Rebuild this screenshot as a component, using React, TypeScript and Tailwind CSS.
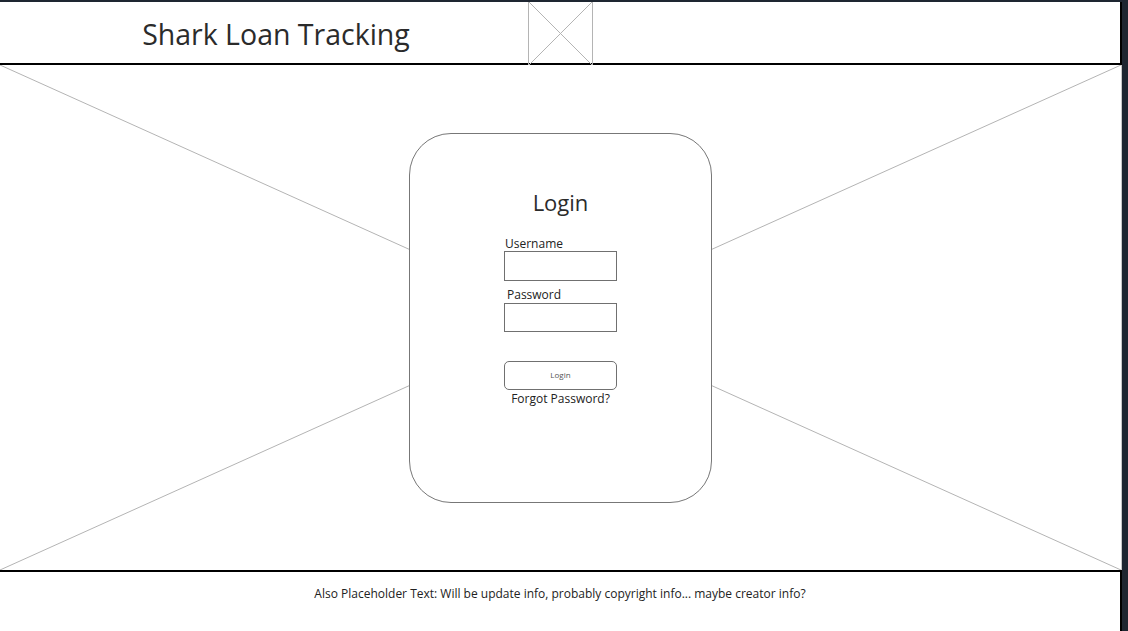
import React from "react";

const font = { fontFamily: '"Open Sans", "Noto Sans", "DejaVu Sans", sans-serif' };

function XBox({ className }: { className?: string }) {
  return (
    <svg className={className} viewBox="0 0 100 100" preserveAspectRatio="none">
      <line x1="0" y1="0" x2="100" y2="100" stroke="#b4b4b4" strokeWidth="1" vectorEffect="non-scaling-stroke" />
      <line x1="100" y1="0" x2="0" y2="100" stroke="#b4b4b4" strokeWidth="1" vectorEffect="non-scaling-stroke" />
    </svg>
  );
}

export default function App() {
  return (
    <div className="w-[1128px] h-[631px] bg-[#1e2631] pt-[2px] pr-[6px] overflow-hidden" style={font}>
      <div className="w-[1122px] h-[629px] bg-white flex flex-col text-[#222]">
        {/* Header */}
        <header className="h-[63px] flex border-b-2 border-r-2 border-black shrink-0">
          <div className="w-[528px] flex items-center justify-center pl-[24px]">
            <h1 className="text-[28.5px] leading-none text-[#2b2b2b] mt-[3px]">Shark Loan Tracking</h1>
          </div>
          <div className="w-[65px] h-[63px] border-x border-[#b4b4b4]">
            <XBox className="w-full h-full" />
          </div>
          <div className="flex-1" />
        </header>

        {/* Main */}
        <main className="relative h-[505px] shrink-0 border-r border-[#c8c8c8] flex items-center justify-center">
          <XBox className="absolute inset-0 w-full h-full" />
          <div className="relative w-[303px] h-[370px] bg-white border-[1.5px] border-[#777777] rounded-[42px] flex flex-col items-center pt-[57px]">
            <h2 className="text-[22px] leading-none text-[#2b2b2b]">Login</h2>
            <div className="mt-[25px] w-[113px] flex flex-col">
              <label className="text-[12px] leading-none text-[#222] pl-[1px]">Username</label>
              <div className="mt-[1px] h-[30px] border border-[#707070]" />
              <label className="mt-[8px] text-[12px] leading-none text-[#222] pl-[3px]">Password</label>
              <div className="mt-[2px] h-[29px] border border-[#707070]" />
              <button className="mt-[29px] h-[29px] border border-[#707070] rounded-[5px] text-[8px] text-[#555] flex items-center justify-center">
                Login
              </button>
            </div>
            <div className="mt-[3px] text-[12px] leading-none text-[#222]">Forgot Password?</div>
          </div>
        </main>

        {/* Footer */}
        <footer className="flex-1 border-t-2 border-r-2 border-black flex justify-center pt-[16px]">
          <p className="text-[12px] leading-none text-[#222]">
            Also Placeholder Text: Will be update info, probably copyright info... maybe creator info?
          </p>
        </footer>
      </div>
    </div>
  );
}
